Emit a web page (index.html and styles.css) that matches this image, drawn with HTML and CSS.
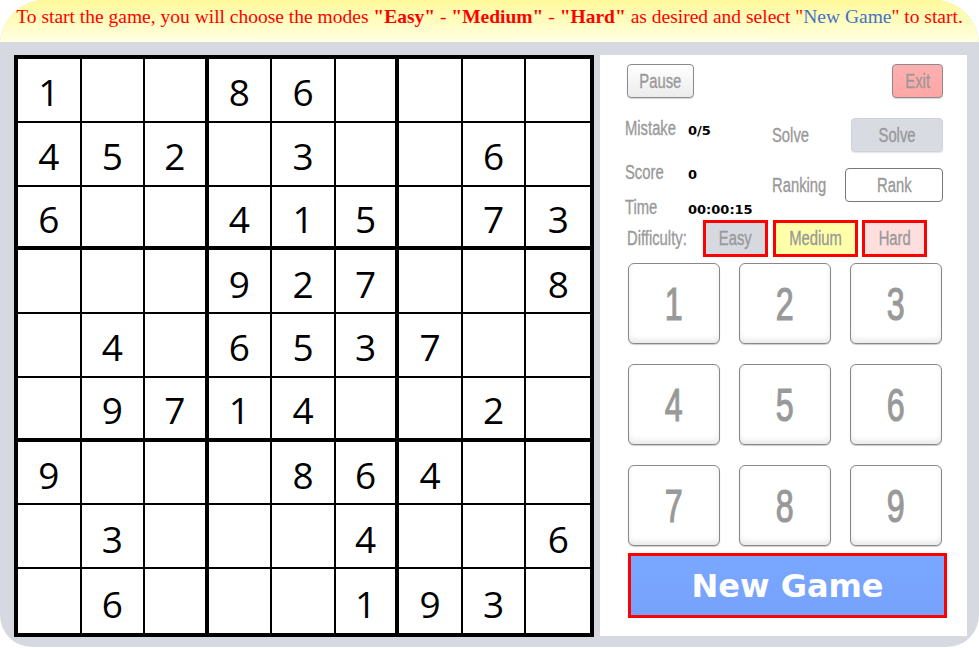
FILE: index.html
```html
<!DOCTYPE html>
<html lang="en">
<head>
<meta charset="utf-8">
<title>Sudoku</title>
<link rel="stylesheet" href="styles.css">
</head>
<body>
<div class="app">
  <header class="notice">
    To start the game, you will choose the modes <b>"Easy"</b> - <b>"Medium"</b> - <b>"Hard"</b> as desired and select "<span class="blue">New Game</span>" to start.
  </header>
  <main class="main">
    <div class="board">
      <div class="c">1</div><div class="c"></div><div class="c"></div><div class="c">8</div><div class="c">6</div><div class="c"></div><div class="c"></div><div class="c"></div><div class="c"></div>
      <div class="c">4</div><div class="c">5</div><div class="c">2</div><div class="c"></div><div class="c">3</div><div class="c"></div><div class="c"></div><div class="c">6</div><div class="c"></div>
      <div class="c">6</div><div class="c"></div><div class="c"></div><div class="c">4</div><div class="c">1</div><div class="c">5</div><div class="c"></div><div class="c">7</div><div class="c">3</div>
      <div class="c"></div><div class="c"></div><div class="c"></div><div class="c">9</div><div class="c">2</div><div class="c">7</div><div class="c"></div><div class="c"></div><div class="c">8</div>
      <div class="c"></div><div class="c">4</div><div class="c"></div><div class="c">6</div><div class="c">5</div><div class="c">3</div><div class="c">7</div><div class="c"></div><div class="c"></div>
      <div class="c"></div><div class="c">9</div><div class="c">7</div><div class="c">1</div><div class="c">4</div><div class="c"></div><div class="c"></div><div class="c">2</div><div class="c"></div>
      <div class="c">9</div><div class="c"></div><div class="c"></div><div class="c"></div><div class="c">8</div><div class="c">6</div><div class="c">4</div><div class="c"></div><div class="c"></div>
      <div class="c"></div><div class="c">3</div><div class="c"></div><div class="c"></div><div class="c"></div><div class="c">4</div><div class="c"></div><div class="c"></div><div class="c">6</div>
      <div class="c"></div><div class="c">6</div><div class="c"></div><div class="c"></div><div class="c"></div><div class="c">1</div><div class="c">9</div><div class="c">3</div><div class="c"></div>
    </div>
    <aside class="panel">
      <div class="top-row">
        <button class="btn btn-pause"><span class="cond">Pause</span></button>
        <button class="btn btn-exit"><span class="cond">Exit</span></button>
      </div>
      <div class="info">
        <div class="stats">
          <div class="stat stat-mistake"><span class="label"><span class="cond-l">Mistake</span></span><span class="value">0/5</span></div>
          <div class="stat stat-score"><span class="label"><span class="cond-l">Score</span></span><span class="value">0</span></div>
          <div class="stat stat-time"><span class="label"><span class="cond-l">Time</span></span><span class="value">00:00:15</span></div>
        </div>
        <div class="actions">
          <div class="action action-solve"><span class="label"><span class="cond-l">Solve</span></span><button class="btn btn-solve"><span class="cond">Solve</span></button></div>
          <div class="action action-rank"><span class="label"><span class="cond-l">Ranking</span></span><button class="btn btn-rank"><span class="cond">Rank</span></button></div>
        </div>
      </div>
      <div class="difficulty">
        <span class="label diff-label"><span class="cond-l">Difficulty:</span></span>
        <button class="diff diff-easy"><span class="cond">Easy</span></button>
        <button class="diff diff-medium"><span class="cond">Medium</span></button>
        <button class="diff diff-hard"><span class="cond">Hard</span></button>
      </div>
      <div class="numpad">
        <button class="num"><span class="cond">1</span></button><button class="num"><span class="cond">2</span></button><button class="num"><span class="cond">3</span></button>
        <button class="num"><span class="cond">4</span></button><button class="num"><span class="cond">5</span></button><button class="num"><span class="cond">6</span></button>
        <button class="num"><span class="cond">7</span></button><button class="num"><span class="cond">8</span></button><button class="num"><span class="cond">9</span></button>
      </div>
      <button class="new-game">New Game</button>
    </aside>
  </main>
</div>
</body>
</html>
```

FILE: styles.css
```css
* { box-sizing: border-box; }

body {
  margin: 0;
  background: #ffffff;
}

.app {
  width: 979px;
  height: 647px;
  border-radius: 45px 45px 32px 32px;
  overflow: hidden;
  background: #d6d9e0;
}

.notice {
  height: 42px;
  padding-top: 5px;
  background: linear-gradient(to bottom, #fff99a, #ffffe2);
  color: #ff0000;
  font-family: "Liberation Serif", "Times New Roman", serif;
  font-size: 19.5px;
  line-height: 24px;
  text-align: center;
  white-space: nowrap;
}

.notice .blue { color: #4472c4; }

.main {
  display: flex;
  gap: 6px;
  padding: 13px 12px 0 14px;
}

.board {
  width: 580px;
  height: 582px;
  border: 4px solid #000;
  background: #fff;
  display: grid;
  grid-template-columns: repeat(9, 1fr);
  grid-template-rows: repeat(9, 1fr);
}

.c {
  border-right: 2px solid #000;
  border-bottom: 2px solid #000;
  display: flex;
  align-items: center;
  justify-content: center;
  padding-top: 4px;
  font-family: "Open Sans", "Noto Sans", sans-serif;
  font-size: 37px;
  color: #000;
}

.c:nth-child(9n+3),
.c:nth-child(9n+6) { border-right-width: 4px; }
.c:nth-child(9n) { border-right: none; }
.c:nth-child(n+19):nth-child(-n+27),
.c:nth-child(n+46):nth-child(-n+54) { border-bottom-width: 4px; }
.c:nth-child(n+73) { border-bottom: none; }

.panel {
  width: 367px;
  height: 581px;
  background: #fff;
  padding: 9px 24px 0 27px;
  font-family: "Liberation Sans", Arial, sans-serif;
  color: #999;
}

/* narrow lettering, scaled around its centre (inside buttons) */
.cond {
  display: inline-block;
  transform: scaleX(0.74);
  transform-origin: center;
  -webkit-text-stroke: 0.35px #999;
}

/* narrow lettering, scaled from its left edge (labels) */
.cond-l {
  display: inline-block;
  transform: scaleX(0.74);
  transform-origin: left center;
  white-space: nowrap;
  -webkit-text-stroke: 0.35px #999;
}

.btn {
  font-family: inherit;
  color: #999;
  font-size: 20px;
  height: 34px;
  border-radius: 4px;
  padding: 0;
  border: 1px solid #8a8a8a;
  white-space: nowrap;
}

.top-row {
  display: flex;
  justify-content: space-between;
}

.btn-pause {
  width: 67px;
  background: linear-gradient(to bottom, #ffffff, #ececec);
  box-shadow: 0 1px 1px rgba(0,0,0,0.15);
}

.btn-exit {
  width: 51px;
  background: linear-gradient(to bottom, #ffb0b0, #ffa6a6);
  box-shadow: 0 1px 1px rgba(0,0,0,0.15);
}

.label {
  font-size: 20px;
  color: #999;
}

.info {
  display: flex;
  height: 107px;
  margin-top: 15px;
}

.stats {
  width: 148px;
  margin-left: -2px;
}

.stat {
  display: flex;
  align-items: baseline;
  height: 30px;
  line-height: 30px;
}

.stat .label { width: 63px; }

.stat .value {
  font-family: "DejaVu Sans", Verdana, sans-serif;
  font-weight: bold;
  font-size: 13px;
  color: #000;
}

.stat-score { margin-top: 14px; }
.stat-time { margin-top: 5px; }

.actions {
  flex: 1;
}

.action {
  display: flex;
  align-items: center;
  justify-content: space-between;
}

.action-solve { margin-top: 5px; }
.action-rank { margin-top: 16px; }

.btn-solve {
  width: 92px;
  background: #d8dbe2;
  border-color: #d0d3da;
  box-shadow: 0 1px 1px rgba(0,0,0,0.1);
}

.btn-rank {
  width: 98px;
  background: #fff;
  border-color: #777;
}

.difficulty {
  display: flex;
  align-items: center;
  height: 37px;
}

.diff-label { width: 76px; }

.diff {
  height: 37px;
  border: 3px solid #ff0000;
  padding: 0;
  font-family: inherit;
  font-size: 20px;
  color: #999;
  white-space: nowrap;
}

.diff-easy { width: 65px; background: #d6d9e0; }
.diff-medium { width: 85px; background: #ffffaa; margin-left: 5px; }
.diff-hard { width: 65px; background: #ffdede; margin-left: 4px; }

.numpad {
  display: grid;
  grid-template-columns: repeat(3, 92px);
  grid-auto-rows: 81px;
  column-gap: 19px;
  row-gap: 20px;
  margin-top: 6px;
  margin-left: 1px;
}

.num {
  border: 1px solid #888;
  border-radius: 6px;
  background: #fff;
  box-shadow: inset 0 -4px 5px rgba(0,0,0,0.08), 0 1px 1px rgba(0,0,0,0.2);
  font-family: inherit;
  font-size: 46px;
  color: #999;
  padding: 0;
}

.num .cond {
  transform: scaleX(0.7);
  -webkit-text-stroke: 1.2px #999;
}

.new-game {
  display: block;
  width: 319px;
  height: 65px;
  margin-top: 7px;
  margin-left: 1px;
  border: 3px solid #ff0000;
  background: linear-gradient(to bottom, #7aa7ff, #76a2fb);
  color: #fff;
  font-family: "DejaVu Sans", Verdana, sans-serif;
  font-weight: bold;
  font-size: 32px;
  padding: 0;
}
```
